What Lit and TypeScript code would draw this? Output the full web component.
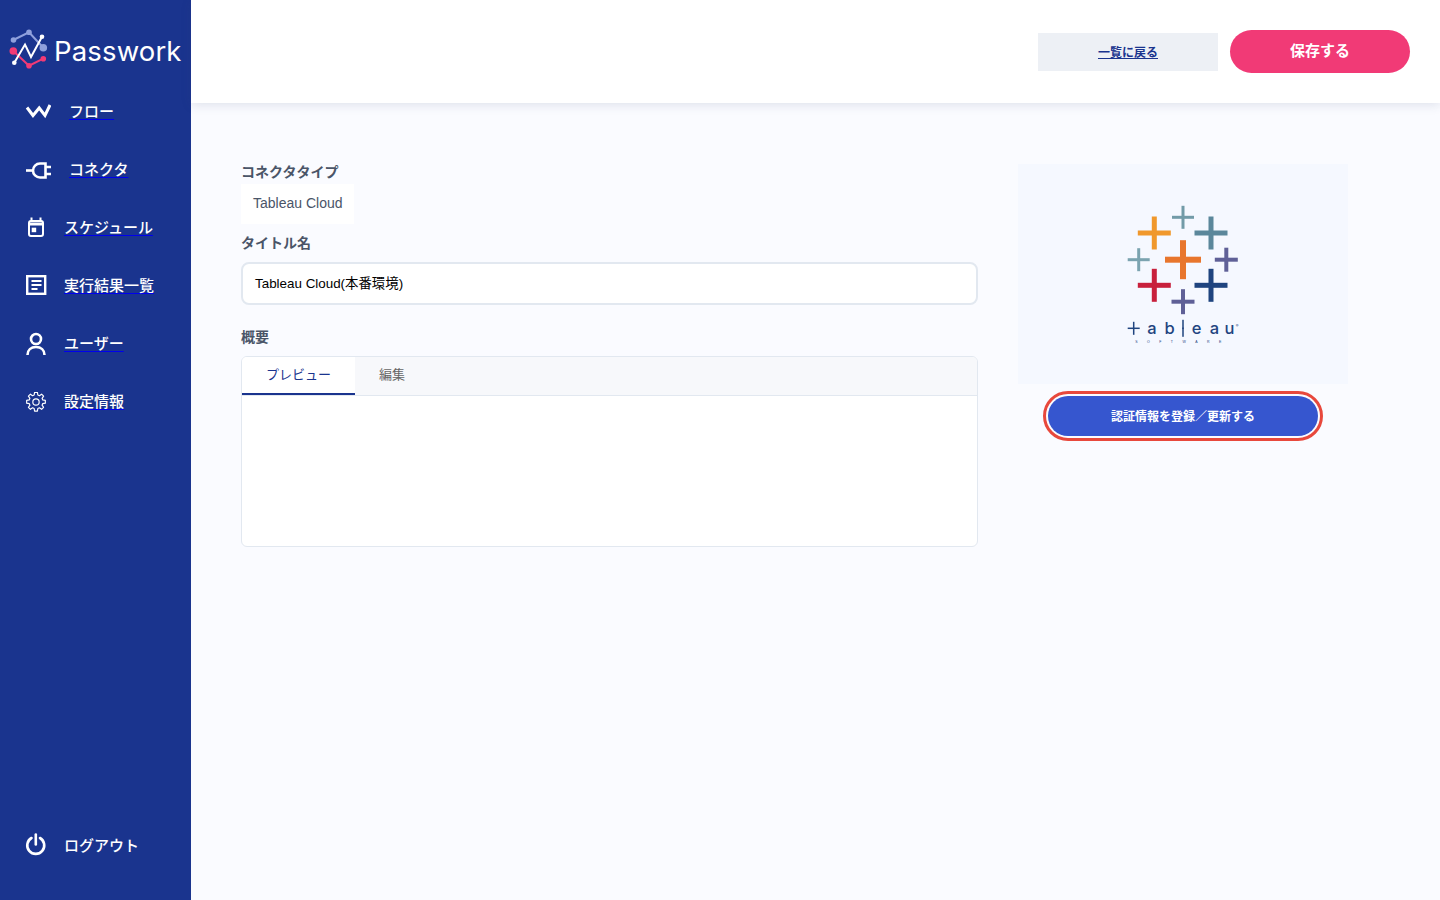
import { LitElement, html, css, svg } from "lit";
import { customElement } from "lit/decorators.js";

const cross = (x: number, y: number, w: number, h: number, t: number, color: string) => svg`
  <rect x=${x - w / 2} y=${y - t / 2} width=${w} height=${t} fill=${color}></rect>
  <rect x=${x - t / 2} y=${y - h / 2} width=${t} height=${h} fill=${color}></rect>
`;

const icons = {
  flow: html`<svg width="26" height="16" viewBox="0 0 26 16" fill="none" stroke="#fff" stroke-width="3"><path d="M2 3.500 8 11.500 14.200 4 20 11.500 25 1"></path></svg>`,
  plug: html`<svg width="27" height="18" viewBox="0 0 27 18" fill="none" stroke="#fff" stroke-width="2.600"><path d="M1 9.500H9"></path><path d="M20.500 2.500H15a7 7 0 0 0 0 14h5.500z"></path><path d="M20 6h6M20 13h6"></path></svg>`,
  calendar: html`<svg width="20" height="22" viewBox="0 0 20 22" fill="none" stroke="#fff" stroke-width="2"><rect x="4" y="4" width="14" height="15" rx="2"></rect><path d="M4 7h14" stroke-width="3"></path><path d="M6.500 0.500v4M15.500 0.500v4"></path><rect x="6.700" y="10.700" width="4.500" height="4.500" fill="#fff" stroke="none"></rect></svg>`,
  report: html`<svg width="22" height="22" viewBox="0 0 22 22" fill="none" stroke="#fff"><rect x="2.200" y="1.200" width="18" height="17.600" stroke-width="2.400"></rect><path d="M6.500 6h10M6.500 10h10M6.500 14h6" stroke-width="1.800"></path></svg>`,
  user: html`<svg width="22" height="24" viewBox="0 0 22 24" fill="none" stroke="#fff" stroke-width="2.600"><circle cx="11" cy="7" r="5"></circle><path d="M2.500 23c0-5 3.500-8 8.500-8s8.500 3 8.500 8"></path></svg>`,
  gear: html`<svg class="gear" width="20" height="20" viewBox="0 0 24 24" fill="none" stroke="#fff" stroke-width="1.400" stroke-linejoin="round"><circle cx="12" cy="12" r="3.800"></circle><path d="M10.300 1.500h3.400l.5 3.100 1.900.8 2.600-1.800 2.400 2.400-1.800 2.600.8 1.900 3.100.5v3.400l-3.100.5-.8 1.900 1.800 2.600-2.400 2.400-2.600-1.800-1.900.8-.5 3.100h-3.400l-.5-3.100-1.900-.8-2.600 1.800-2.400-2.400 1.800-2.600-.8-1.900-3.100-.5v-3.400l3.100-.5.8-1.900-1.800-2.600 2.400-2.400 2.600 1.800 1.900-.8z" transform="translate(0 -1)"></path></svg>`,
  power: html`<svg width="22" height="24" viewBox="0 0 22 24" fill="none" stroke="#fff" stroke-width="2.600" stroke-linecap="round"><path d="M6.500 5a8.500 8.500 0 1 0 8.500 0"></path><path d="M10.800 1.500v10"></path></svg>`,
};

@customElement("app-root")
export class AppRoot extends LitElement {
  static styles = css`
    :host {
      display: flex;
      min-height: 900px;
      background: #fafbff;
      font-family: "Liberation Sans", "Noto Sans CJK JP", sans-serif;
      color: #4a5568;
    }
    .side {
      width: 191px;
      flex: none;
      height: 900px;
      background: #1a348e;
      display: flex;
      flex-direction: column;
      color: #fff;
    }
    .brand {
      height: 83px;
      display: flex;
      align-items: flex-start;
      padding: 28px 0 0 9px;
      box-sizing: border-box;
      gap: 4px;
    }
    .brand span {
      font: 400 27.500px/47px "Inter", sans-serif;
      letter-spacing: 0.150px;
    }
    .nav {
      display: flex;
      flex-direction: column;
    }
    .item {
      height: 58px;
      display: flex;
      align-items: center;
      padding-left: 25px;
      font-size: 15px;
      font-weight: 500;
      color: #fff;
    }
    .ico {
      width: 39px;
      flex: none;
      display: flex;
    }
    .ico.wide {
      width: 44px;
    }
    .gear {
      margin-left: 1px;
    }
    .link {
      padding-bottom: 4px;
      text-decoration: underline;
      text-decoration-color: #0000ee;
      text-underline-offset: 2px;
    }
    .plain {
      padding-bottom: 2px;
    }
    .logout {
      margin-top: auto;
      margin-bottom: 26px;
    }
    .main {
      flex: 1;
      display: flex;
      flex-direction: column;
    }
    .top {
      height: 103px;
      background: #fff;
      box-shadow: 0 2px 10px rgba(60, 70, 110, 0.14);
      display: flex;
      align-items: center;
      justify-content: flex-end;
      gap: 12px;
      padding-right: 30px;
    }
    .back {
      width: 180px;
      height: 38px;
      background: #edf0f5;
      display: flex;
      align-items: center;
      justify-content: center;
      font-size: 12px;
      font-weight: 700;
      color: #1a348e;
      text-decoration: underline;
    }
    .save {
      width: 180px;
      height: 43px;
      box-sizing: border-box;
      padding-bottom: 4px;
      border-radius: 22px;
      background: #f13a76;
      color: #fff;
      font-size: 15px;
      font-weight: 700;
      display: flex;
      align-items: center;
      justify-content: center;
    }
    .content {
      display: grid;
      grid-template-columns: 737px 330px;
      gap: 40px;
      padding: 61px 0 0 50px;
    }
    .label {
      font-size: 14px;
      font-weight: 700;
      line-height: 16px;
      color: #4a5568;
    }
    .type {
      display: inline-block;
      background: #fff;
      font-size: 14px;
      line-height: 39px;
      padding: 0 11px 1px 12px;
      margin: 4px 0 11px;
    }
    .input {
      height: 43px;
      box-sizing: border-box;
      border: 2px solid #e2e8f0;
      border-radius: 8px;
      background: #fff;
      margin: 11px 0 24px;
      padding: 0 12px 4px;
      display: flex;
      align-items: center;
      font-size: 13.400px;
      color: #000;
    }
    .editor {
      margin-top: 11px;
      height: 191px;
      box-sizing: border-box;
      border: 1px solid #e2e8f0;
      border-radius: 6px;
      background: #fff;
      overflow: hidden;
    }
    .tabs {
      height: 39px;
      box-sizing: border-box;
      background: #f7f8fb;
      border-bottom: 1px solid #e2e8f0;
      display: flex;
      font-size: 13px;
    }
    .tab {
      width: 113px;
      height: 38px;
      box-sizing: border-box;
      display: flex;
      align-items: center;
      justify-content: center;
      color: #666;
      padding-bottom: 3px;
    }
    .tab.on {
      background: #fff;
      color: #1a348e;
      border-bottom: 2px solid #1a348e;
    }
    .tab.off {
      width: 74px;
      padding-bottom: 5px;
    }
    .right {
      display: flex;
      flex-direction: column;
      align-items: center;
    }
    .logo {
      width: 330px;
      height: 220px;
      background: #f5f8ff;
      display: block;
    }
    .auth {
      margin-top: 12px;
      width: 270px;
      height: 40px;
      box-sizing: border-box;
      padding-bottom: 2px;
      border-radius: 20px;
      background: #3656cf;
      color: #fff;
      font-size: 12px;
      font-weight: 700;
      display: flex;
      align-items: center;
      justify-content: center;
      outline: 3px solid #e8483c;
      outline-offset: 2px;
    }
  `;

  render() {
    return html`
      <aside class="side">
        <div class="brand">
          <svg width="41" height="42" viewBox="9 28 41 42" fill="none" stroke-width="2">
            <path d="M13.300 40 29 32.300 43.300 47.700" stroke="#8fa0dc"></path>
            <path d="M13.300 51 29 65.700 43.300 58.700" stroke="#f13a76"></path>
            <path d="M14.300 62.700 25 44.500 31 57 42 36.700" stroke="#fff"></path>
            <circle cx="13.500" cy="40" r="2.800" fill="#8fa0dc"></circle>
            <circle cx="29" cy="32.300" r="2.800" fill="#8fa0dc"></circle>
            <circle cx="43.300" cy="47.700" r="3.800" fill="#8fa0dc"></circle>
            <circle cx="42" cy="36.700" r="2.300" fill="#fff"></circle>
            <circle cx="13.300" cy="51" r="3.800" fill="#f13a76"></circle>
            <circle cx="29" cy="65.700" r="2.800" fill="#f13a76"></circle>
            <circle cx="43.300" cy="58.700" r="2.800" fill="#f13a76"></circle>
            <circle cx="14.300" cy="62.700" r="2.300" fill="#fff"></circle>
          </svg>
          <span>Passwork</span>
        </div>
        <nav class="nav">
          <a class="item"><span class="ico wide">${icons.flow}</span><span class="link">フロー</span></a>
          <a class="item"><span class="ico wide">${icons.plug}</span><span class="link">コネクタ</span></a>
          <a class="item"><span class="ico">${icons.calendar}</span><span class="link">スケジュール</span></a>
          <a class="item"><span class="ico">${icons.report}</span><span class="link">実行結果一覧</span></a>
          <a class="item"><span class="ico">${icons.user}</span><span class="link">ユーザー</span></a>
          <a class="item"><span class="ico">${icons.gear}</span><span class="link">設定情報</span></a>
        </nav>
        <a class="item logout"><span class="ico">${icons.power}</span><span class="plain">ログアウト</span></a>
      </aside>
      <main class="main">
        <header class="top">
          <a class="back">一覧に戻る</a>
          <a class="save">保存する</a>
        </header>
        <section class="content">
          <div>
            <div class="label">コネクタタイプ</div>
            <div class="type">Tableau Cloud</div>
            <div class="label">タイトル名</div>
            <div class="input">Tableau Cloud(本番環境)</div>
            <div class="label">概要</div>
            <div class="editor">
              <div class="tabs">
                <div class="tab on">プレビュー</div>
                <div class="tab off">編集</div>
              </div>
            </div>
          </div>
          <div class="right">
            <svg class="logo" viewBox="1018 164 330 220">
              ${cross(1154.3, 233, 33, 33, 5, "#f0982c")}
              ${cross(1183, 217.3, 22, 23, 3, "#729ba8")}
              ${cross(1211, 233, 33, 33, 5, "#5b879b")}
              ${cross(1138.7, 259.7, 22, 23, 3, "#7ba3b0")}
              ${cross(1183, 259.7, 36, 39, 6, "#e8762d")}
              ${cross(1226.3, 259.7, 23, 24, 4, "#5f6097")}
              ${cross(1154.3, 285.3, 33, 33, 5, "#c8203c")}
              ${cross(1211, 285.3, 33, 33, 5, "#1f447f")}
              ${cross(1183, 301.7, 23, 25, 4, "#5f6097")}
              ${cross(1133.7, 328.3, 12, 13, 1.500, "#1f447f")}
              ${cross(1183, 328.3, 1.500, 17, 1.500, "#1f447f")}
              <g font-family="Inter, sans-serif" font-size="16.500" font-weight="500" fill="#1f447f" text-anchor="middle">
                <text x="1152" y="334">a</text>
                <text x="1169.500" y="334">b</text>
                <text x="1196.500" y="334">e</text>
                <text x="1214.500" y="334">a</text>
                <text x="1229.500" y="334">u</text>
              </g>
              <text x="1237" y="327" font-family="Inter, sans-serif" font-size="4" fill="#1f447f" text-anchor="middle">®</text>
              <text x="1183" y="342.500" font-family="Liberation Sans, sans-serif" font-size="3.500" letter-spacing="9.500" text-anchor="middle" fill="#1f447f">SOFTWARE</text>
            </svg>
            <a class="auth">認証情報を登録／更新する</a>
          </div>
        </section>
      </main>
    `;
  }
}
